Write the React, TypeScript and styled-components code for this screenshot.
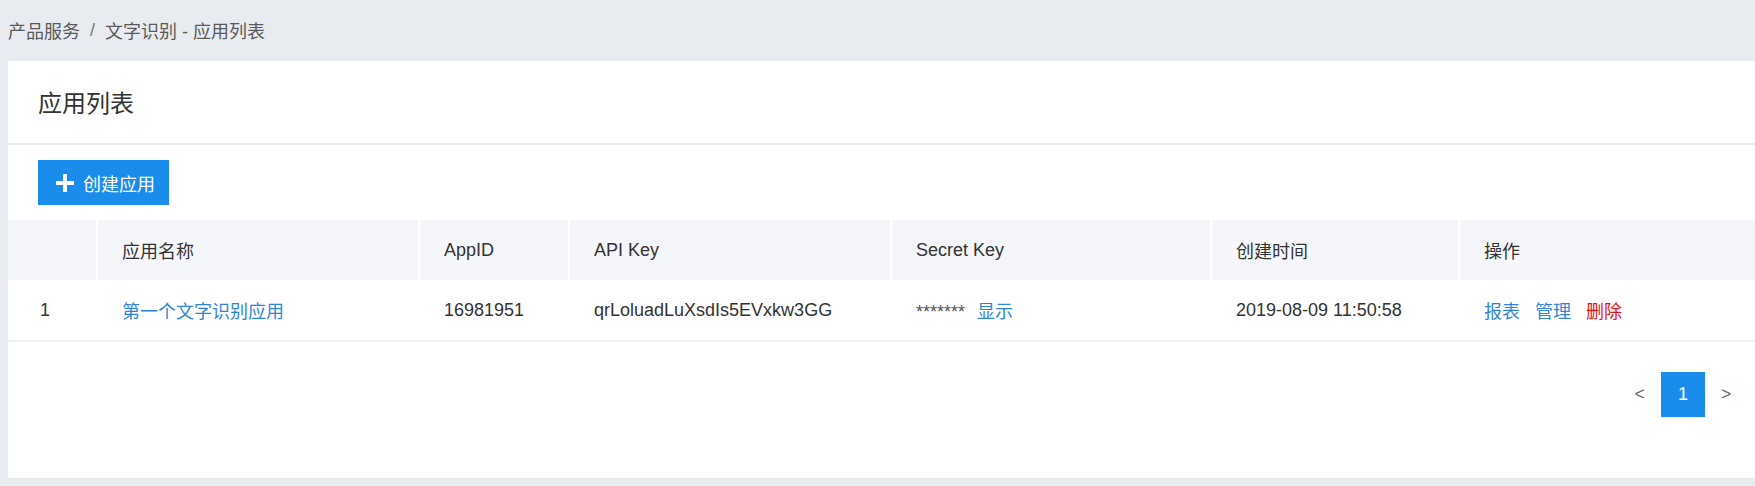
import React from "react";
import styled, { createGlobalStyle } from "styled-components";

const GlobalStyle = createGlobalStyle`
  html, body {
    margin: 0;
    padding: 0;
    background: #e8ebf0;
    font-family: "Liberation Sans", "Noto Sans CJK SC", sans-serif;
    color: #333;
  }
  * { box-sizing: border-box; }
`;

const Page = styled.div`
  width: 1755px;
  height: 486px;
  overflow: hidden;
  padding-left: 8px;
  background: #e8ebf0;
`;

const Breadcrumb = styled.div`
  height: 61px;
  display: flex;
  align-items: center;
  font-size: 18px;
  color: #5a5a5a;
  padding-bottom: 1px;
`;

const Sep = styled.span`
  padding: 0 10px;
  color: #777;
`;

const Card = styled.div`
  background: #fff;
  height: 417px;
  display: flex;
  flex-direction: column;
`;

const CardHeader = styled.div`
  height: 84px;
  border-bottom: 2px solid #e8eaee;
  display: flex;
  align-items: center;
  padding-left: 30px;
  padding-bottom: 2px;
  font-size: 24px;
  color: #333;
`;

const Toolbar = styled.div`
  padding: 15px 30px;
  display: flex;
`;

const PrimaryButton = styled.button`
  height: 45px;
  width: 131px;
  border: none;
  background: #1a8dec;
  color: #fff;
  display: flex;
  align-items: center;
  padding: 0 0 0 18px;
  gap: 9px;
  font-family: inherit;
  font-size: 18px;
  cursor: pointer;
`;

const Table = styled.table`
  width: 1747px;
  table-layout: fixed;
  border-collapse: collapse;
  font-size: 18px;
`;

const HeadCell = styled.th<{ $first?: boolean }>`
  height: 60px;
  background: #f5f6f9;
  text-align: left;
  font-weight: normal;
  color: #333;
  padding: 0 0 0 ${(p) => (p.$first ? "32px" : "24px")};
  border-left: ${(p) => (p.$first ? "none" : "2px solid #fff")};
`;

const BodyRow = styled.tr`
  border-bottom: 2px solid #eef0f4;
`;

const Cell = styled.td<{ $first?: boolean }>`
  height: 61px;
  padding: 0 0 0 ${(p) => (p.$first ? "32px" : "25px")};
  color: #333;
  white-space: nowrap;
`;

const Link = styled.a<{ $danger?: boolean }>`
  color: ${(p) => (p.$danger ? "#e0141c" : "#2f86d6")};
  text-decoration: none;
  cursor: pointer;
`;

const Mask = styled.span`
  color: #555;
  margin-right: 12px;
`;

const Actions = styled.div`
  display: flex;
  gap: 15px;
`;

const Pagination = styled.div`
  display: flex;
  justify-content: flex-end;
  align-items: center;
  padding: 30px 8px 0 0;
`;

const PageArrow = styled.span<{ $w: number }>`
  width: ${(p) => p.$w}px;
  height: 45px;
  display: flex;
  align-items: center;
  justify-content: center;
  color: #666;
  font-size: 17.5px;
`;

const PageNum = styled.span`
  width: 44px;
  height: 45px;
  background: #1a8dec;
  color: #fff;
  display: flex;
  align-items: center;
  justify-content: center;
  font-size: 18px;
`;

const PlusIcon = () => (
  <svg width="18" height="18" viewBox="0 0 18 18">
    <rect x="7" y="0" width="4" height="18" fill="#fff" />
    <rect x="0" y="7" width="18" height="4" fill="#fff" />
  </svg>
);

const columns = [89, 322, 150, 322, 320, 248, 296];
const headers = ["", "应用名称", "AppID", "API Key", "Secret Key", "创建时间", "操作"];

export default function App() {
  return (
    <>
      <GlobalStyle />
      <Page>
        <Breadcrumb>
          产品服务<Sep>/</Sep>文字识别 - 应用列表
        </Breadcrumb>
        <Card>
          <CardHeader>应用列表</CardHeader>
          <Toolbar>
            <PrimaryButton>
              <PlusIcon />
              创建应用
            </PrimaryButton>
          </Toolbar>
          <Table>
            <colgroup>
              {columns.map((w, i) => (
                <col key={i} style={{ width: w }} />
              ))}
            </colgroup>
            <thead>
              <tr>
                {headers.map((h, i) => (
                  <HeadCell key={i} $first={i === 0}>
                    {h}
                  </HeadCell>
                ))}
              </tr>
            </thead>
            <tbody>
              <BodyRow>
                <Cell $first>1</Cell>
                <Cell>
                  <Link>第一个文字识别应用</Link>
                </Cell>
                <Cell>16981951</Cell>
                <Cell>qrLoluadLuXsdIs5EVxkw3GG</Cell>
                <Cell>
                  <Mask>*******</Mask>
                  <Link>显示</Link>
                </Cell>
                <Cell>2019-08-09 11:50:58</Cell>
                <Cell>
                  <Actions>
                    <Link>报表</Link>
                    <Link>管理</Link>
                    <Link $danger>删除</Link>
                  </Actions>
                </Cell>
              </BodyRow>
            </tbody>
          </Table>
          <Pagination>
            <PageArrow $w={43}>&lt;</PageArrow>
            <PageNum>1</PageNum>
            <PageArrow $w={42}>&gt;</PageArrow>
          </Pagination>
        </Card>
      </Page>
    </>
  );
}
